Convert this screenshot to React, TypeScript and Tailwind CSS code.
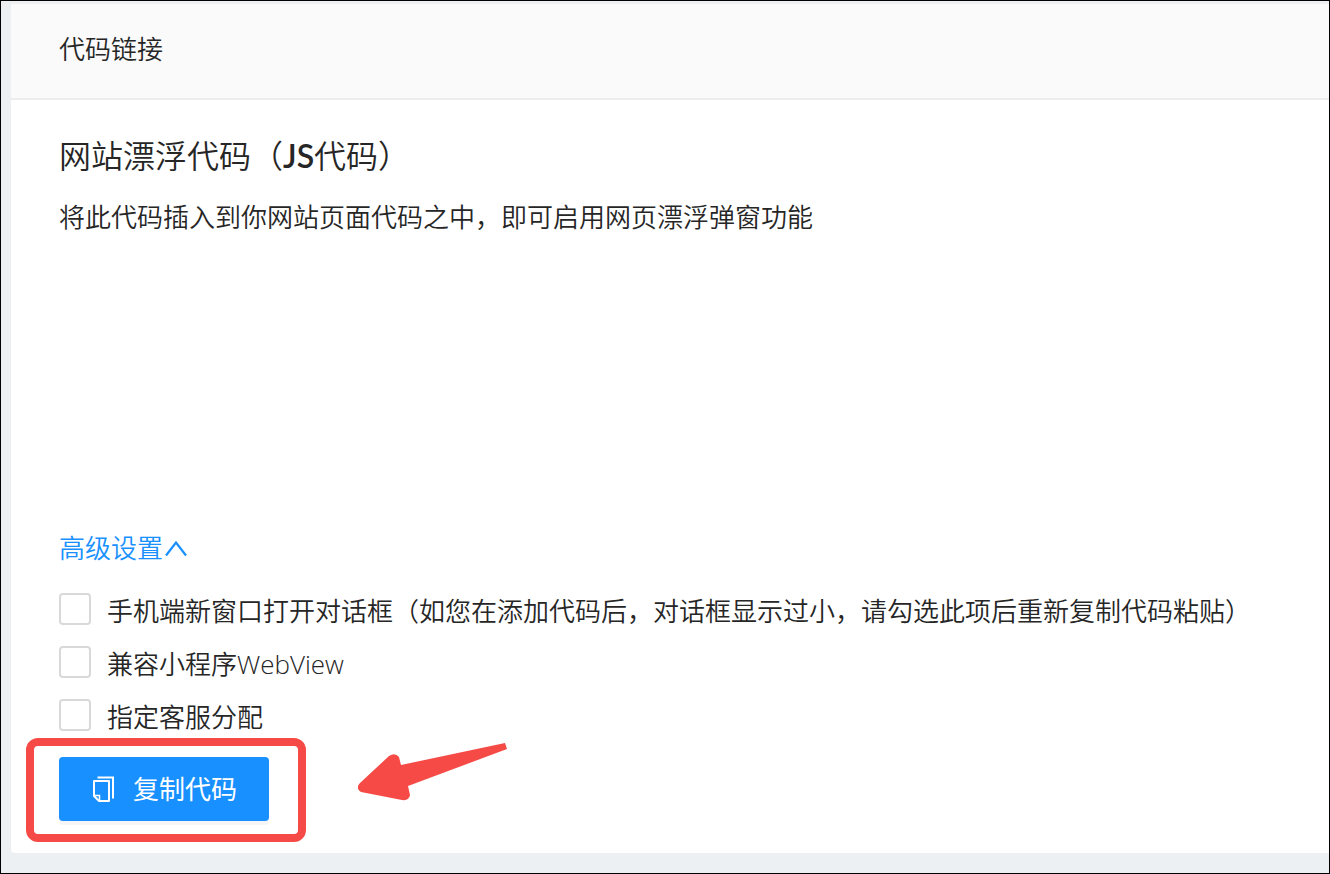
import { useState } from "react";

const options = [
  {
    id: "new-window",
    label: "手机端新窗口打开对话框（如您在添加代码后，对话框显示过小，请勾选此项后重新复制代码粘贴）",
  },
  { id: "webview", label: "兼容小程序WebView" },
  { id: "assign", label: "指定客服分配" },
];

function CopyIcon() {
  return (
    <svg
      viewBox="0 0 26 26"
      className="size-[26px] shrink-0"
      fill="none"
      stroke="currentColor"
      strokeWidth="2"
      aria-hidden="true"
    >
      <path d="M6.500 1.500H22V22.500" />
      <path d="M3 5h15v20H8L3 20z" strokeLinejoin="round" />
      <path d="M3 19.500h5.500V25" strokeWidth="1.500" />
    </svg>
  );
}

function Chevron({ open }: { open: boolean }) {
  return (
    <svg
      viewBox="0 0 26 26"
      className={open ? "size-[26px]" : "size-[26px] rotate-180"}
      fill="none"
      stroke="currentColor"
      strokeWidth="2.200"
      aria-hidden="true"
    >
      <path d="M3 20.500 13 7.500l10 13" />
    </svg>
  );
}

function Arrow() {
  return (
    <svg viewBox="0 0 150 58" className="h-[58px] w-[150px]" fill="#f54a45" aria-hidden="true">
      <path d="M147 0 149 6 50 43 52 52Q51 58 44 57L3 49Q-3 45 2 40L31 13Q37 9 41 14L43 22z" />
    </svg>
  );
}

export default function App() {
  const [open, setOpen] = useState(true);

  return (
    <div className="min-h-screen border border-black bg-[#edf0f3] pt-[3px] pb-5 pl-[10px] font-['Open_Sans','Noto_Sans_CJK_SC',sans-serif] text-[26px] font-[350] text-[#262626]">
      <section className="rounded-l-sm bg-white">
        <header className="border-b-2 border-[#ededed] bg-[#fafafa] px-12 pt-[26px] pb-[30px]">
          <h1 className="leading-[38px]">代码链接</h1>
        </header>

        <div className="px-12 pt-8 pb-8">
          <h2 className="text-[32px] leading-[48px]">
            网站漂浮代码（<span className="font-['Lato',sans-serif] font-semibold">JS</span>代码）
          </h2>
          <p className="mt-[17px] leading-10">将此代码插入到你网站页面代码之中，即可启用网页漂浮弹窗功能</p>

          <button
            type="button"
            onClick={() => setOpen(!open)}
            aria-expanded={open}
            className="mt-[291px] flex items-center leading-10 text-[#1890ff]"
          >
            高级设置
            <Chevron open={open} />
          </button>

          {open && (
            <div className="mt-[25px] flex flex-col gap-[17px]">
              {options.map((option) => (
                <label key={option.id} htmlFor={option.id} className="flex items-start gap-4 leading-9">
                  <input
                    id={option.id}
                    type="checkbox"
                    className="size-8 shrink-0 appearance-none rounded-sm border-2 border-[#d9d9d9] bg-white checked:border-[#1890ff] checked:bg-[#1890ff]"
                  />
                  {option.label}
                </label>
              ))}
            </div>
          )}

          <div className="relative mt-[22px] w-fit">
            <button
              type="button"
              className="flex h-16 items-center gap-4 rounded-sm bg-[#1890ff] px-8 font-normal text-white shadow-[0_4px_0_rgba(0,0,0,0.04)]"
            >
              <CopyIcon />
              复制代码
            </button>
            <div className="pointer-events-none absolute -top-[19px] -right-[37px] -bottom-[21px] -left-[33px] rounded-xl border-8 border-[#f54a45]" />
            <div className="pointer-events-none absolute -top-[14px] left-[299px]">
              <Arrow />
            </div>
          </div>
        </div>
      </section>
    </div>
  );
}
